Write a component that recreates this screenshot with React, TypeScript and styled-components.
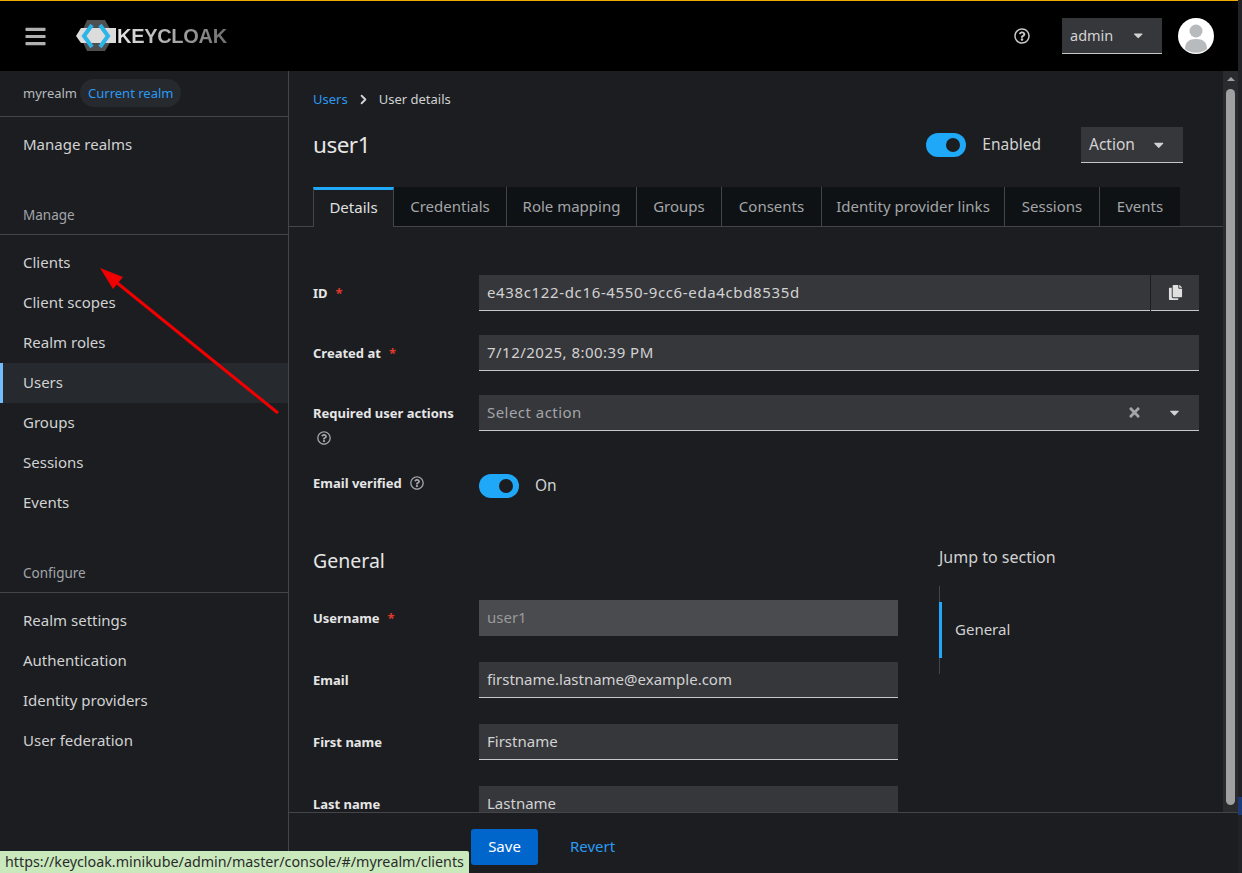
import React from "react";
import styled, { createGlobalStyle } from "styled-components";
import {
  FaBars,
  FaCaretDown,
  FaCopy,
  FaRegQuestionCircle,
  FaTimes,
} from "react-icons/fa";
import { FiChevronRight } from "react-icons/fi";

const manageItems = ["Clients", "Client scopes", "Realm roles", "Users", "Groups", "Sessions", "Events"];
const configureItems = ["Realm settings", "Authentication", "Identity providers", "User federation"];
const tabs = [
  { name: "Details", width: 81 },
  { name: "Credentials", width: 113 },
  { name: "Role mapping", width: 130 },
  { name: "Groups", width: 85 },
  { name: "Consents", width: 100 },
  { name: "Identity provider links", width: 183 },
  { name: "Sessions", width: 95 },
  { name: "Events", width: 80 },
];

const App = () => {
  return (
    <Page>
      <GlobalStyle />
      <Window>
        <TopBar>
          <MenuButton>
            <FaBars />
          </MenuButton>
          <Logo>
            <svg width="44" height="34" viewBox="76 21 44 34">
              <polygon points="87,22 105,22 114,38 105,53 87,53 80,38" fill="#4f4f4f" />
              <polygon points="76,38 81,30 116,30 116,45 81,45" fill="#dcdcdc" />
              <polyline points="92,27 84,38 92,49" fill="none" stroke="#2cb5e8" strokeWidth="4" />
              <polyline points="100,27 108,38 100,49" fill="none" stroke="#2cb5e8" strokeWidth="4" />
            </svg>
            <LogoText>KEYCLOAK</LogoText>
          </Logo>
          <TopRight>
            <HelpTop>
              <FaRegQuestionCircle />
            </HelpTop>
            <UserMenu>
              <span>admin</span>
              <FaCaretDown />
            </UserMenu>
            <Avatar>
              <svg width="36" height="36" viewBox="0 0 36 36">
                <circle cx="18" cy="18" r="18" fill="#fff" />
                <circle cx="18" cy="13" r="6.5" fill="#b8bbbe" />
                <path d="M7 31c0-7 4-10 11-10s11 3 11 10a18 18 0 0 1-22 0z" fill="#b8bbbe" />
              </svg>
            </Avatar>
          </TopRight>
        </TopBar>
        <Body>
          <Sidebar>
            <RealmRow>
              <RealmName>myrealm</RealmName>
              <RealmBadge>Current realm</RealmBadge>
            </RealmRow>
            <NavList>
              <NavItem>Manage realms</NavItem>
            </NavList>
            <GroupTitle>Manage</GroupTitle>
            <NavList>
              {manageItems.map((item) => (
                <NavItem key={item} $active={item === "Users"}>
                  {item}
                </NavItem>
              ))}
            </NavList>
            <GroupTitle>Configure</GroupTitle>
            <NavList>
              {configureItems.map((item) => (
                <NavItem key={item}>{item}</NavItem>
              ))}
            </NavList>
          </Sidebar>
          <Main>
            <ScrollRow>
              <Content>
                <Breadcrumb>
                  <CrumbLink>Users</CrumbLink>
                  <FiChevronRight />
                  <span>User details</span>
                </Breadcrumb>
                <TitleRow>
                  <Title>user1</Title>
                  <TitleActions>
                    <Toggle />
                    <ToggleText>Enabled</ToggleText>
                    <ActionButton>
                      <span>Action</span>
                      <FaCaretDown />
                    </ActionButton>
                  </TitleActions>
                </TitleRow>
                <TabBar>
                  {tabs.map((tab) => (
                    <Tab key={tab.name} $width={tab.width} $active={tab.name === "Details"}>
                      {tab.name}
                    </Tab>
                  ))}
                </TabBar>
                <TopForm>
                  <FormRow>
                    <Label>
                      ID<Required>*</Required>
                    </Label>
                    <InputGroup>
                      <TextInput $tracking={0.64} readOnly value="e438c122-dc16-4550-9cc6-eda4cbd8535d" />
                      <CopyButton>
                        <FaCopy />
                      </CopyButton>
                    </InputGroup>
                  </FormRow>
                  <FormRow>
                    <Label>
                      Created at<Required>*</Required>
                    </Label>
                    <TextInput $tracking={0.48} readOnly value="7/12/2025, 8:00:39 PM" />
                  </FormRow>
                  <FormRow>
                    <Label>
                      Required user actions
                      <HelpBlock>
                        <FaRegQuestionCircle />
                      </HelpBlock>
                    </Label>
                    <SelectBox>
                      <SelectText>Select action</SelectText>
                      <ClearIcon>
                        <FaTimes />
                      </ClearIcon>
                      <FaCaretDown />
                    </SelectBox>
                  </FormRow>
                  <ToggleRow>
                    <Label>
                      Email verified
                      <HelpInline>
                        <FaRegQuestionCircle />
                      </HelpInline>
                    </Label>
                    <ToggleCell>
                      <Toggle />
                      <ToggleText>On</ToggleText>
                    </ToggleCell>
                  </ToggleRow>
                </TopForm>
                <Lower>
                  <GeneralForm>
                    <SectionTitle>General</SectionTitle>
                    <FormRow>
                      <Label>
                        Username<Required>*</Required>
                      </Label>
                      <TextInput readOnly disabled value="user1" />
                    </FormRow>
                    <FormRow>
                      <Label>Email</Label>
                      <TextInput readOnly value="firstname.lastname@example.com" />
                    </FormRow>
                    <FormRow>
                      <Label>First name</Label>
                      <TextInput readOnly value="Firstname" />
                    </FormRow>
                    <FormRow>
                      <Label>Last name</Label>
                      <TextInput readOnly value="Lastname" />
                    </FormRow>
                  </GeneralForm>
                  <JumpPanel>
                    <JumpTitle>Jump to section</JumpTitle>
                    <JumpList>
                      <JumpLink>General</JumpLink>
                    </JumpList>
                  </JumpPanel>
                </Lower>
              </Content>
              <ScrollTrack>
                <ScrollUp />
                <ScrollThumb />
              </ScrollTrack>
            </ScrollRow>
            <Footer>
              <SaveButton>Save</SaveButton>
              <RevertButton>Revert</RevertButton>
            </Footer>
          </Main>
        </Body>
      </Window>
      <SideStrip>
        <StripMark />
      </SideStrip>
      <ArrowOverlay width="190" height="158" viewBox="95 262 190 158">
        <line x1="278" y1="413" x2="116" y2="282" stroke="#f00000" strokeWidth="3" />
        <polygon points="100,268 123,277 113,289" fill="#f00000" />
      </ArrowOverlay>
      <StatusTip>https://keycloak.minikube/admin/master/console/#/myrealm/clients</StatusTip>
    </Page>
  );
};

export default App;

const GlobalStyle = createGlobalStyle`
  html, body {
    margin: 0;
    padding: 0;
    background: #1b1d21;
  }
  * {
    box-sizing: border-box;
  }
  body {
    font-family: "Noto Sans", "Liberation Sans", sans-serif;
    font-size: 15px;
    color: #e0e0e0;
  }
`;

const Page = styled.div`
  position: relative;
  display: flex;
  width: 1242px;
  height: 873px;
  overflow: hidden;
`;

const Window = styled.div`
  display: flex;
  flex-direction: column;
  width: 1238px;
  height: 100%;
`;

const SideStrip = styled.div`
  width: 4px;
  height: 100%;
  padding-top: 797px;
  background: #202226;
`;

const StripMark = styled.div`
  height: 18px;
  background: #1d3a78;
`;

const TopBar = styled.header`
  display: flex;
  align-items: center;
  height: 71px;
  padding-left: 24px;
  background: #000;
  border-top: 1px solid #f0ab00;
`;

const MenuButton = styled.div`
  display: flex;
  width: 52px;
  font-size: 23px;
  color: #b0b0b0;
`;

const Logo = styled.div`
  display: flex;
  align-items: center;
`;

const LogoText = styled.span`
  margin-left: -3px;
  font-family: "Liberation Sans", sans-serif;
  font-size: 20px;
  font-weight: 700;
  letter-spacing: -0.3px;
  background: linear-gradient(90deg, #e6e6e6, #6e6e6e);
  -webkit-background-clip: text;
  background-clip: text;
  color: transparent;
`;

const TopRight = styled.div`
  display: flex;
  align-items: center;
  margin-left: auto;
  padding-right: 24px;
`;

const HelpTop = styled.div`
  display: flex;
  margin-right: 32px;
  font-size: 16px;
  color: #c7c7c7;
`;

const UserMenu = styled.div`
  display: flex;
  align-items: center;
  justify-content: space-between;
  width: 100px;
  height: 36px;
  margin-right: 16px;
  padding: 0 17px 0 8px;
  background: #36373b;
  border-bottom: 1px solid #c7c7c7;
  color: #d2d2d2;
  font-size: 14.5px;
  span {
    margin-bottom: 2px;
  }
`;

const Avatar = styled.div`
  display: flex;
  width: 36px;
  height: 36px;
`;

const Body = styled.div`
  display: flex;
  flex: 1;
  min-height: 0;
`;

const Sidebar = styled.nav`
  width: 289px;
  flex-shrink: 0;
  background: #1b1d21;
  border-right: 1px solid #444548;
`;

const RealmRow = styled.div`
  display: flex;
  align-items: center;
  height: 46px;
  padding: 0 0 2px 23px;
  border-bottom: 1px solid #444548;
`;

const RealmName = styled.span`
  font-size: 13px;
  color: #b8bbbe;
`;

const RealmBadge = styled.span`
  display: flex;
  align-items: center;
  height: 28px;
  margin-left: 3px;
  padding: 0 8px;
  border-radius: 14px;
  background: #26292d;
  color: #2b9af3;
  font-size: 13px;
`;

const NavList = styled.div`
  padding-top: 8px;
`;

const NavItem = styled.div<{ $active?: boolean }>`
  display: flex;
  align-items: center;
  height: 40px;
  padding: 0 0 2px 23px;
  font-size: 15px;
  color: #d2d2d2;
  background: ${({ $active }) => ($active ? "#26292d" : "transparent")};
  box-shadow: ${({ $active }) => ($active ? "inset 3px 0 0 #73bcf7" : "none")};
`;

const GroupTitle = styled.div`
  display: flex;
  align-items: flex-end;
  height: 70px;
  padding: 0 0 9px 23px;
  border-bottom: 1px solid #444548;
  font-size: 13.5px;
  line-height: 20px;
  color: #a3a5a8;
`;

const Main = styled.main`
  display: flex;
  flex-direction: column;
  flex: 1;
  min-width: 0;
`;

const ScrollRow = styled.div`
  display: flex;
  flex: 1;
  min-height: 0;
`;

const Content = styled.div`
  flex: 1;
  min-width: 0;
  overflow: hidden;
`;

const ScrollTrack = styled.div`
  display: flex;
  flex-direction: column;
  align-items: center;
  width: 15px;
  background: #2a2b2e;
`;

const ScrollUp = styled.div`
  width: 0;
  height: 0;
  margin-top: 6px;
  border-left: 4px solid transparent;
  border-right: 4px solid transparent;
  border-bottom: 4px solid #a0a0a0;
`;

const ScrollThumb = styled.div`
  width: 9px;
  height: 716px;
  margin-top: 8px;
  border-radius: 5px;
  background: #a0a0a0;
`;

const Breadcrumb = styled.div`
  display: flex;
  align-items: center;
  gap: 8px;
  height: 18px;
  margin: 19px 0 0 24px;
  font-size: 13px;
  color: #d2d2d2;
  svg {
    font-size: 15px;
    stroke-width: 3;
  }
`;

const CrumbLink = styled.span`
  color: #2b9af3;
`;

const TitleRow = styled.div`
  display: flex;
  align-items: center;
  justify-content: space-between;
  height: 36px;
  margin-top: 19px;
  padding: 0 40px 0 24px;
`;

const Title = styled.h1`
  margin: 0 0 2px;
  font-size: 22.5px;
  font-weight: 400;
  letter-spacing: -0.5px;
  color: #e6e6e6;
`;

const TitleActions = styled.div`
  display: flex;
  align-items: center;
`;

const Toggle = styled.span`
  position: relative;
  display: block;
  flex-shrink: 0;
  width: 40px;
  height: 24px;
  border-radius: 12px;
  background: #1fa7f8;
  &::after {
    content: "";
    position: absolute;
    top: 5px;
    right: 6px;
    width: 14px;
    height: 14px;
    border-radius: 50%;
    background: #1b1d21;
  }
`;

const ToggleText = styled.span`
  margin: 0 0 2px 16px;
  font-size: 15.5px;
  color: #d2d2d2;
`;

const ActionButton = styled.div`
  display: flex;
  align-items: center;
  justify-content: space-between;
  width: 102px;
  height: 36px;
  margin-left: 40px;
  padding: 0 17px 0 8px;
  background: #36373b;
  border-bottom: 1px solid #c7c7c7;
  font-size: 15.5px;
  color: #d2d2d2;
  span {
    margin-bottom: 2px;
  }
`;

const TabBar = styled.div`
  display: flex;
  align-items: flex-start;
  height: 40px;
  margin-top: 24px;
  padding-left: 24px;
  border-bottom: 1px solid #444548;
`;

const Tab = styled.div<{ $active?: boolean; $width: number }>`
  display: flex;
  align-items: center;
  justify-content: center;
  flex-shrink: 0;
  width: ${({ $width }) => $width}px;
  height: ${({ $active }) => ($active ? "40px" : "39px")};
  padding-bottom: ${({ $active }) => ($active ? "3px" : "1px")};
  font-size: 15px;
  color: ${({ $active }) => ($active ? "#e0e0e0" : "#a3a5a8")};
  background: ${({ $active }) => ($active ? "#1b1d21" : "#0f1214")};
  border-top: ${({ $active }) => ($active ? "3px solid #1fa7f8" : "none")};
  border-left: ${({ $active }) => ($active ? "1px solid #444548" : "none")};
  border-right: 1px solid #444548;
  &:last-child {
    border-right: none;
  }
`;

const TopForm = styled.div`
  display: flex;
  flex-direction: column;
  gap: 24px;
  margin-top: 48px;
  padding: 0 24px;
`;

const FormRow = styled.div`
  display: grid;
  grid-template-columns: 166px 1fr;
  align-items: start;
`;

const ToggleRow = styled(FormRow)`
  margin-top: -4px;
`;

const Label = styled.label`
  padding-top: 8px;
  font-size: 13px;
  line-height: 20px;
  font-weight: 700;
  color: #e6e6e6;
`;

const Required = styled.span`
  margin-left: 8px;
  color: #e0392b;
`;

const HelpBlock = styled.span`
  display: flex;
  padding: 8px 0 0 4px;
  font-size: 14px;
  color: #a3a5a8;
`;

const HelpInline = styled.span`
  margin-left: 8px;
  font-size: 14px;
  color: #a3a5a8;
  vertical-align: -2px;
`;

const InputGroup = styled.div`
  display: flex;
  gap: 1px;
`;

const TextInput = styled.input<{ $tracking?: number }>`
  width: 100%;
  height: 36px;
  padding: 0 8px 2px;
  border: none;
  border-bottom: 1px solid #c7c7c7;
  border-radius: 0;
  outline: none;
  background: #36373b;
  font-family: inherit;
  font-size: 15px;
  letter-spacing: ${({ $tracking }) => $tracking ?? 0}px;
  color: #d2d2d2;
  &:disabled {
    background: #4a4b4f;
    border-bottom: none;
    color: #999;
  }
`;

const CopyButton = styled.div`
  display: flex;
  align-items: center;
  justify-content: center;
  flex-shrink: 0;
  width: 48px;
  height: 36px;
  background: #36373b;
  border-bottom: 1px solid #c7c7c7;
  font-size: 15px;
  color: #e0e0e0;
`;

const SelectBox = styled.div`
  display: flex;
  align-items: center;
  height: 36px;
  padding: 0 17px 0 8px;
  background: #36373b;
  border-bottom: 1px solid #c7c7c7;
  color: #d2d2d2;
`;

const SelectText = styled.span`
  flex: 1;
  margin-bottom: 2px;
  font-size: 15px;
  letter-spacing: 0.46px;
  color: #a3a5a8;
`;

const ClearIcon = styled.span`
  display: flex;
  margin-right: 25px;
  font-size: 15px;
  color: #a3a5a8;
`;

const ToggleCell = styled.div`
  display: flex;
  align-items: center;
  margin-top: 9px;
`;

const Lower = styled.div`
  display: flex;
  margin-top: 48px;
  padding-left: 24px;
`;

const GeneralForm = styled.div`
  display: flex;
  flex-direction: column;
  flex-shrink: 0;
  gap: 26px;
  width: 585px;
`;

const SectionTitle = styled.h2`
  height: 28px;
  margin: 0;
  padding-top: 1px;
  font-size: 19.5px;
  line-height: 28px;
  font-weight: 400;
  color: #e6e6e6;
`;

const JumpPanel = styled.aside`
  margin: 1px 0 0 41px;
`;

const JumpTitle = styled.div`
  font-size: 16px;
  line-height: 20px;
  color: #d2d2d2;
`;

const JumpList = styled.div`
  display: flex;
  align-items: center;
  height: 88px;
  margin-top: 19px;
  border-left: 1px solid #444548;
`;

const JumpLink = styled.div`
  display: flex;
  align-items: center;
  width: 116px;
  height: 56px;
  margin-left: -1px;
  padding: 0 0 2px 13px;
  border-left: 3px solid #1fa7f8;
  font-size: 15px;
  color: #d2d2d2;
`;

const Footer = styled.footer`
  display: flex;
  align-items: center;
  height: 61px;
  padding: 7px 0 0 182px;
  border-top: 1px solid #444548;
`;

const SaveButton = styled.button`
  width: 67px;
  height: 36px;
  padding: 0 0 2px;
  border: none;
  border-radius: 3px;
  background: #0066cc;
  font-family: inherit;
  font-size: 15px;
  color: #fff;
`;

const RevertButton = styled.button`
  margin-left: 16px;
  padding: 0 16px 2px;
  border: none;
  background: transparent;
  font-family: inherit;
  font-size: 15px;
  color: #2b9af3;
`;

const ArrowOverlay = styled.svg`
  position: absolute;
  left: 95px;
  top: 262px;
`;

const StatusTip = styled.div`
  position: absolute;
  left: 0;
  bottom: 0;
  height: 22px;
  padding: 0 5px;
  background: #c9e9bd;
  border-top-right-radius: 2px;
  font-size: 14.3px;
  line-height: 22px;
  color: #2b2b2b;
`;
